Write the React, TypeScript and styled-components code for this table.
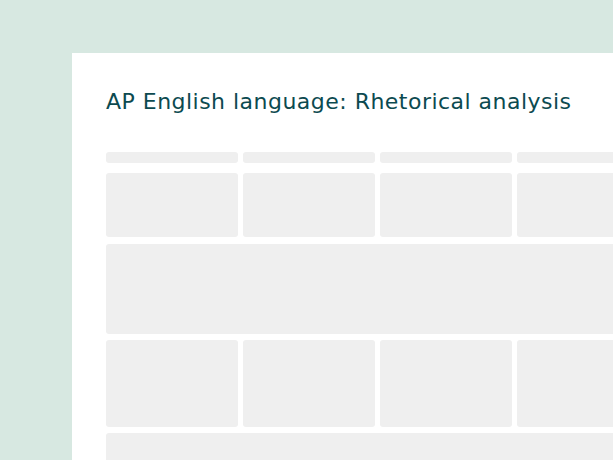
import React from "react";
import styled, { createGlobalStyle } from "styled-components";

const GlobalStyle = createGlobalStyle`
  html, body {
    margin: 0;
    padding: 0;
    width: 613px;
    height: 460px;
    overflow: hidden;
    background: #d7e8e1;
  }
  #root {
    height: 100%;
  }
`;

const Page = styled.div`
  height: 100%;
  padding: 53px 0 0 72px;
  box-sizing: border-box;
`;

const Sheet = styled.div`
  height: 100%;
  background: #ffffff;
  padding: 35px 0 0 34px;
  box-sizing: border-box;
  overflow: hidden;
`;

const Title = styled.h1`
  margin: 0;
  font-family: "DejaVu Sans", "Noto Sans", sans-serif;
  font-weight: 400;
  font-size: 22px;
  line-height: 28px;
  letter-spacing: 0.48px;
  color: #0c4a50;
  white-space: nowrap;
`;

const Table = styled.div`
  margin-top: 36px;
  display: flex;
  flex-direction: column;
`;

const Row = styled.div<{ h: number; gapTop: number }>`
  display: grid;
  grid-template-columns: repeat(4, 132px);
  column-gap: 5px;
  height: ${(p) => p.h}px;
  margin-top: ${(p) => p.gapTop}px;
  flex-shrink: 0;
`;

const Cell = styled.div<{ wide?: boolean }>`
  background: #efefef;
  border-radius: 3px;
  grid-column: ${(p) => (p.wide ? "1 / -1" : "auto")};
`;

const rows: { h: number; gapTop: number; wide?: boolean }[] = [
  { h: 11, gapTop: 0 },
  { h: 64, gapTop: 10 },
  { h: 90, gapTop: 7, wide: true },
  { h: 87, gapTop: 6 },
  { h: 60, gapTop: 6, wide: true },
];

export default function App() {
  return (
    <>
      <GlobalStyle />
      <Page>
        <Sheet>
          <Title>AP English language: Rhetorical analysis</Title>
          <Table>
            {rows.map((r, i) => (
              <Row key={i} h={r.h} gapTop={r.gapTop}>
                {r.wide ? (
                  <Cell wide />
                ) : (
                  [0, 1, 2, 3].map((c) => <Cell key={c} />)
                )}
              </Row>
            ))}
          </Table>
        </Sheet>
      </Page>
    </>
  );
}
